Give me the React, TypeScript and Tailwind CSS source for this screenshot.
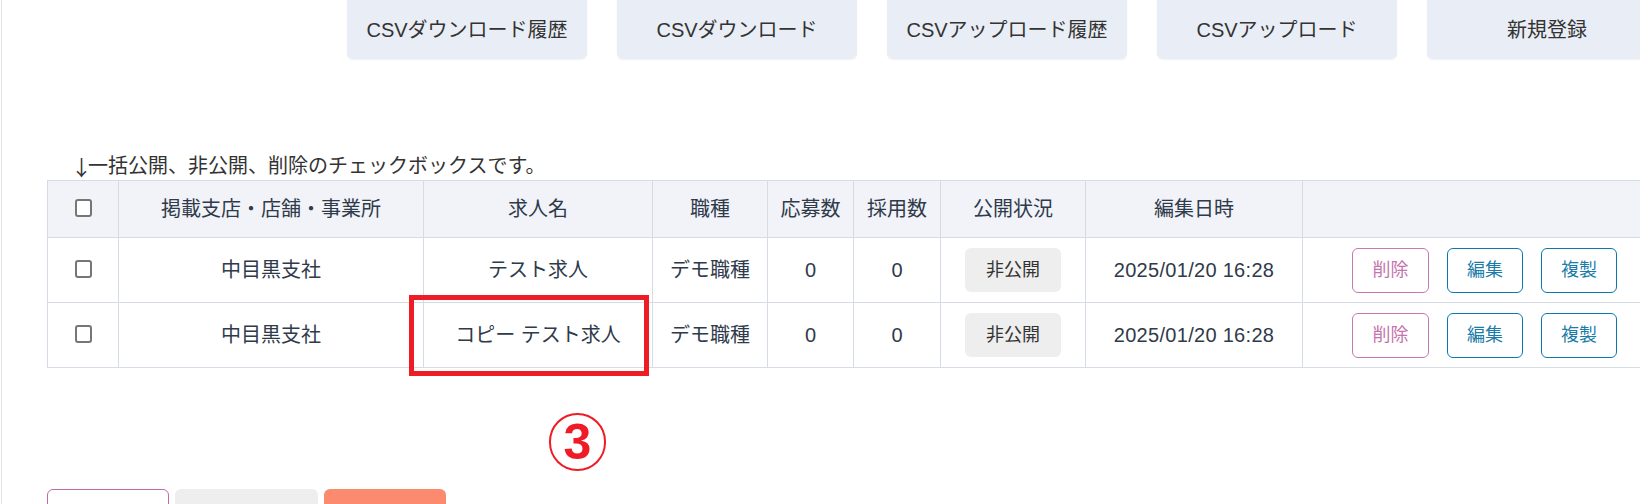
import React from "react";

const FONT = { fontFamily: '"Liberation Sans", "Noto Sans CJK JP", sans-serif' };

function Check() {
  return (
    <span className="mb-[6px] inline-block h-[18px] w-[17px] rounded-[3px] border-2 border-[#767676] bg-white align-middle" />
  );
}

const rows = [
  { store: "中目黒支社", name: "テスト求人" },
  { store: "中目黒支社", name: "コピー テスト求人" },
];

export default function App() {
  return (
    <div className="relative w-[1640px] h-[504px] overflow-hidden bg-white text-[#333]" style={FONT}>
      <div className="ml-px h-full w-[1666px] border-l border-[#e3e3e3] pl-[45px]">
        {/* top buttons */}
        <div className="flex w-[1620px] justify-end gap-[30px]">
          {["CSVダウンロード履歴", "CSVダウンロード", "CSVアップロード履歴", "CSVアップロード", "新規登録"].map((t) => (
            <div
              key={t}
              className="flex h-[59px] w-[240px] items-center justify-center rounded-b-[6px] bg-[#e9eef6] text-[20px] text-[#333] shadow-[0_1px_2px_rgba(0,0,0,0.06)]"
            >
              {t}
            </div>
          ))}
        </div>

        {/* notice */}
        <div className="mt-[94px] flex h-[26px] items-end pl-[24px] text-[20px] leading-[26px] text-[#333]">
          <span
            className="tracking-[-4px] text-[21px] leading-[26px]"
            style={{ fontFamily: '"Noto Sans CJK JP", sans-serif' }}
          >
            ↓
          </span>
          <span>一括公開、非公開、削除のチェックボックスです。</span>
        </div>

        {/* table */}
        <table className="mt-px w-[1620px] table-fixed border-collapse text-[20px] text-[#2f3a4a]">
          <colgroup>
            <col className="w-[71px]" />
            <col className="w-[305px]" />
            <col className="w-[229px]" />
            <col className="w-[115px]" />
            <col className="w-[86px]" />
            <col className="w-[87px]" />
            <col className="w-[145px]" />
            <col className="w-[217px]" />
            <col />
          </colgroup>
          <thead>
            <tr className="h-[57px] bg-[#f1f3f8]">
              <th className="border border-[#d6dce6] font-normal">
                <Check />
              </th>
              <th className="border border-[#d6dce6] font-normal">掲載支店・店舗・事業所</th>
              <th className="border border-[#d6dce6] font-normal">求人名</th>
              <th className="border border-[#d6dce6] font-normal">職種</th>
              <th className="border border-[#d6dce6] font-normal">応募数</th>
              <th className="border border-[#d6dce6] font-normal">採用数</th>
              <th className="border border-[#d6dce6] font-normal">公開状況</th>
              <th className="border border-[#d6dce6] font-normal">編集日時</th>
              <th className="border border-[#d6dce6] font-normal"></th>
            </tr>
          </thead>
          <tbody>
            {rows.map((r, i) => (
              <tr key={i} className="h-[65px]">
                <td className="border border-[#d6dce6] text-center">
                  <Check />
                </td>
                <td className="border border-[#d6dce6] text-center">{r.store}</td>
                <td className="border border-[#d6dce6] text-center">{r.name}</td>
                <td className="border border-[#d6dce6] text-center">デモ職種</td>
                <td className="border border-[#d6dce6] text-center">0</td>
                <td className="border border-[#d6dce6] text-center">0</td>
                <td className="border border-[#d6dce6] text-center">
                  <span className="inline-flex h-[44px] w-[96px] items-center justify-center rounded-[6px] bg-[#eeeeee] text-[18px] text-[#333]">
                    非公開
                  </span>
                </td>
                <td className="border border-[#d6dce6] text-center tracking-[0.3px]">2025/01/20 16:28</td>
                <td className="border border-[#d6dce6]">
                  <div className="flex items-center justify-center gap-[18px]">
                    <span className="flex h-[45px] w-[77px] items-center justify-center rounded-[6px] border-[1.5px] border-[#c878b0] text-[18px] text-[#c575ad]">
                      削除
                    </span>
                    <span className="flex h-[45px] w-[76px] items-center justify-center rounded-[6px] border-[1.5px] border-[#0a7aad] text-[18px] text-[#1a7ca8]">
                      編集
                    </span>
                    <span className="flex h-[45px] w-[76px] items-center justify-center rounded-[6px] border-[1.5px] border-[#0a7aad] text-[18px] text-[#1a7ca8]">
                      複製
                    </span>
                  </div>
                </td>
              </tr>
            ))}
          </tbody>
        </table>

        {/* bottom buttons */}
        <div className="mt-[121px] flex gap-[6px]">
          <div className="h-[40px] w-[122px] rounded-[6px] border border-[#c06aa8] bg-white" />
          <div className="h-[40px] w-[143px] rounded-[6px] bg-[#eeeeee]" />
          <div className="h-[40px] w-[122px] rounded-[6px] bg-[#fb8a6e]" />
        </div>
      </div>

      {/* annotations */}
      <div className="absolute left-[409px] top-[295px] h-[81px] w-[240px] border-[5px] border-[#ee1c25]" />
      <div className="absolute left-[549px] top-[413px] flex h-[58px] w-[57px] items-center justify-center rounded-full border-[2.5px] border-[#ee1c25] text-[50px] font-bold leading-none text-[#ee1c25]">
        3
      </div>
    </div>
  );
}
